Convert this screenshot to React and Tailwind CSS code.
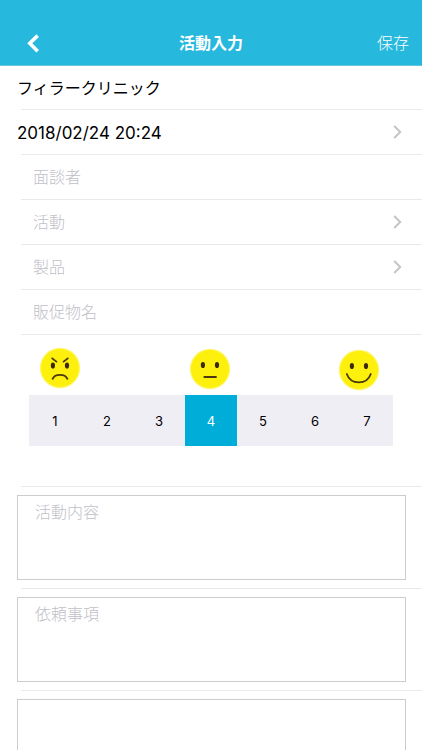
const fields = [
  { label: '面談者', arrow: false },
  { label: '活動', arrow: true },
  { label: '製品', arrow: true },
  { label: '販促物名', arrow: false },
]

const scores = [1, 2, 3, 4, 5, 6, 7]

function Chevron() {
  return (
    <svg
      className="h-[14px] w-[9px] shrink-0"
      viewBox="0 0 9 14"
      fill="none"
      stroke="#c4c4c9"
      strokeWidth="2"
    >
      <path d="M1.2 1L7.2 7L1.2 13" />
    </svg>
  )
}

function Divider() {
  return <div className="ml-[21px] h-px shrink-0 bg-[#e9e9eb]" />
}

function Face({ mood }) {
  const eyeY = mood === 'angry' ? 18.5 : 17

  return (
    <svg className="h-[42px] w-[42px]" viewBox="0 0 42 42" fill="none">
      <circle cx="21" cy="21" r="20.2" fill="#fff56e" />
      <circle cx="21" cy="21" r="19" fill="#fdf00c" />
      <g fill="#3b2a08">
        <ellipse cx="13.9" cy={eyeY} rx="2.1" ry="3.1" />
        <ellipse cx="28" cy={eyeY} rx="2.1" ry="3.1" />
      </g>
      <g stroke="#4a370c" strokeWidth="1.8" strokeLinecap="round">
        {mood === 'angry' && (
          <>
            <path d="M13.2 11.4L17.4 14.6" />
            <path d="M28.8 11.4L24.6 14.6" />
            <path d="M13.6 31.8C16 26.6 26 26.6 28.4 31.8" />
          </>
        )}
        {mood === 'neutral' && <path d="M15.3 29H27" />}
        {mood === 'happy' && <path d="M8.8 25C12.8 36.2 28.8 36.2 32.8 25" />}
      </g>
    </svg>
  )
}

function Memo({ label }) {
  return (
    <div className="h-[101px] shrink-0 pt-2 pr-4 pl-[17px]">
      <div className="h-[85px] border border-[#cbcbd0] pt-1 pl-[17px] leading-6 font-light text-[#c0c0c7]">
        {label}
      </div>
    </div>
  )
}

export default function App() {
  return (
    <div className="flex h-[750px] w-[422px] flex-col overflow-hidden bg-white font-['Inter','Noto_Sans_CJK_JP',sans-serif] text-[16px] text-black">
      <header className="flex h-[66px] shrink-0 items-end border-b border-[#67c6de] bg-[#27b8dd] text-white">
        <div className="grid h-11 w-full grid-cols-3 items-center pr-[13px] pl-[27px]">
          <svg
            className="h-[19px] w-[12px]"
            viewBox="0 0 12 19"
            fill="none"
            stroke="currentColor"
            strokeWidth="3.6"
          >
            <path d="M10.7 1.6L2.8 9.3L10.7 17.2" />
          </svg>
          <h1 className="-ml-[14px] text-center font-bold">活動入力</h1>
          <span className="text-right font-light">保存</span>
        </div>
      </header>

      <div className="flex h-[43px] shrink-0 items-center pt-px pl-[17px]">
        フィラークリニック
      </div>
      <Divider />
      <div className="flex h-11 shrink-0 items-center justify-between pr-5 pl-[17px]">
        <span className="pt-[3px] text-[17px]">2018/02/24 20:24</span>
        <Chevron />
      </div>
      <Divider />

      {fields.map((field) => (
        <div key={field.label} className="shrink-0">
          <div className="flex h-11 items-center justify-between pr-5 pl-[33px] font-light text-[#c0c0c7]">
            <span>{field.label}</span>
            {field.arrow && <Chevron />}
          </div>
          <Divider />
        </div>
      ))}

      <div className="h-[151px] shrink-0 pr-[29px] pl-[29px]">
        <div className="flex h-[60px] justify-between pr-[13px] pl-[10px]">
          <div className="pt-3">
            <Face mood="angry" />
          </div>
          <div className="pt-[13px] pl-px">
            <Face mood="neutral" />
          </div>
          <div className="pt-[14px]">
            <Face mood="happy" />
          </div>
        </div>
        <div className="grid h-[51px] grid-cols-7 bg-[#efeef4] text-[13px]">
          {scores.map((score) => (
            <button
              key={score}
              type="button"
              className={score === 4 ? 'bg-[#00add8] pt-0.5 text-white' : 'pt-0.5'}
            >
              {score}
            </button>
          ))}
        </div>
      </div>
      <Divider />

      <Memo label="活動内容" />
      <Divider />
      <Memo label="依頼事項" />
      <Divider />
      <Memo />
    </div>
  )
}
